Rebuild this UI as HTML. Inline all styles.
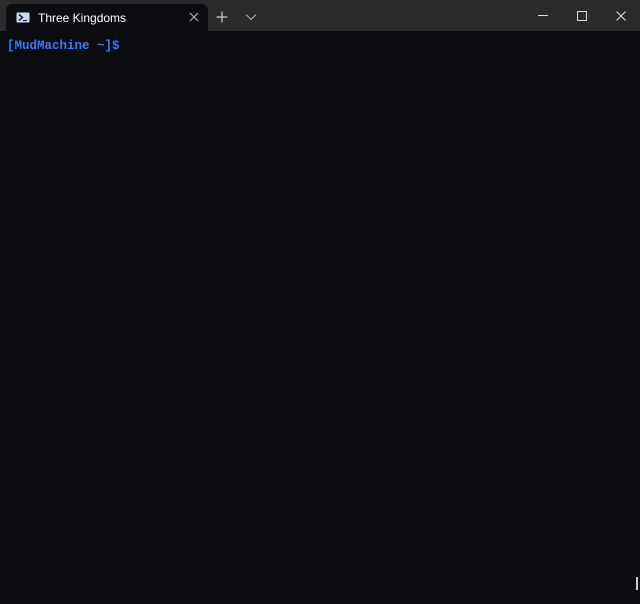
<!DOCTYPE html>
<html><head><meta charset="utf-8"><style>
html,body{margin:0;padding:0;width:640px;height:604px;overflow:hidden;background:#0c0d10;}
.bar{position:absolute;left:0;top:0;width:640px;height:31px;background:#2b2b2b;}
.tab{position:absolute;left:6px;top:4px;width:202px;height:27px;background:#0c0d10;border-radius:6px 6px 0 0;}
.title{position:absolute;left:32px;top:7px;font:12px "Liberation Sans",sans-serif;color:#fff;}
.term{position:absolute;left:0;top:31px;width:640px;height:573px;background:#0c0d10;}
.prompt{position:absolute;left:7px;top:39px;font:bold 12.5px "Liberation Mono",monospace;color:#3b78ff;}
svg{position:absolute;}
</style></head><body>
<div class="bar"></div>
<div class="tab">
<svg style="left:10px;top:8px" width="14" height="11" viewBox="0 0 14 11"><rect x="0.5" y="0.5" width="13" height="10" fill="#cfd8ea" rx="1"/><path d="M3 2.5 L6.5 5.5 L3 8.5" stroke="#1a2a50" stroke-width="1.6" fill="none"/><path d="M7 8.5 H11" stroke="#1a2a50" stroke-width="1.2"/></svg>
<div class="title">Three Kingdoms</div>
<svg style="left:183px;top:8px" width="10" height="10" viewBox="0 0 10 10"><path d="M1 1L9 9M9 1L1 9" stroke="#bbb" stroke-width="1.1"/></svg>
</div>
<svg style="left:216px;top:11px" width="12" height="12" viewBox="0 0 12 12"><path d="M6 0.5V11.5M0.5 6H11.5" stroke="#ccc" stroke-width="1.2"/></svg>
<svg style="left:245px;top:13px" width="12" height="8" viewBox="0 0 12 8"><path d="M1 1.5L6 6.5L11 1.5" stroke="#aaa" stroke-width="1.1" fill="none"/></svg>
<svg style="left:538px;top:15px" width="10" height="2"><rect width="10" height="1" fill="#ddd"/></svg>
<svg style="left:577px;top:11px" width="10" height="10" viewBox="0 0 10 10"><rect x="0.5" y="0.5" width="9" height="9" stroke="#ddd" fill="none"/></svg>
<svg style="left:616px;top:11px" width="10" height="10" viewBox="0 0 10 10"><path d="M0.5 0.5L9.5 9.5M9.5 0.5L0.5 9.5" stroke="#ddd" stroke-width="1.1"/></svg>
<div class="term"></div>
<div class="prompt">[MudMachine ~]$</div>
<div style="position:absolute;left:636px;top:577px;width:2px;height:13px;background:#ccc;"></div>
</body></html>
